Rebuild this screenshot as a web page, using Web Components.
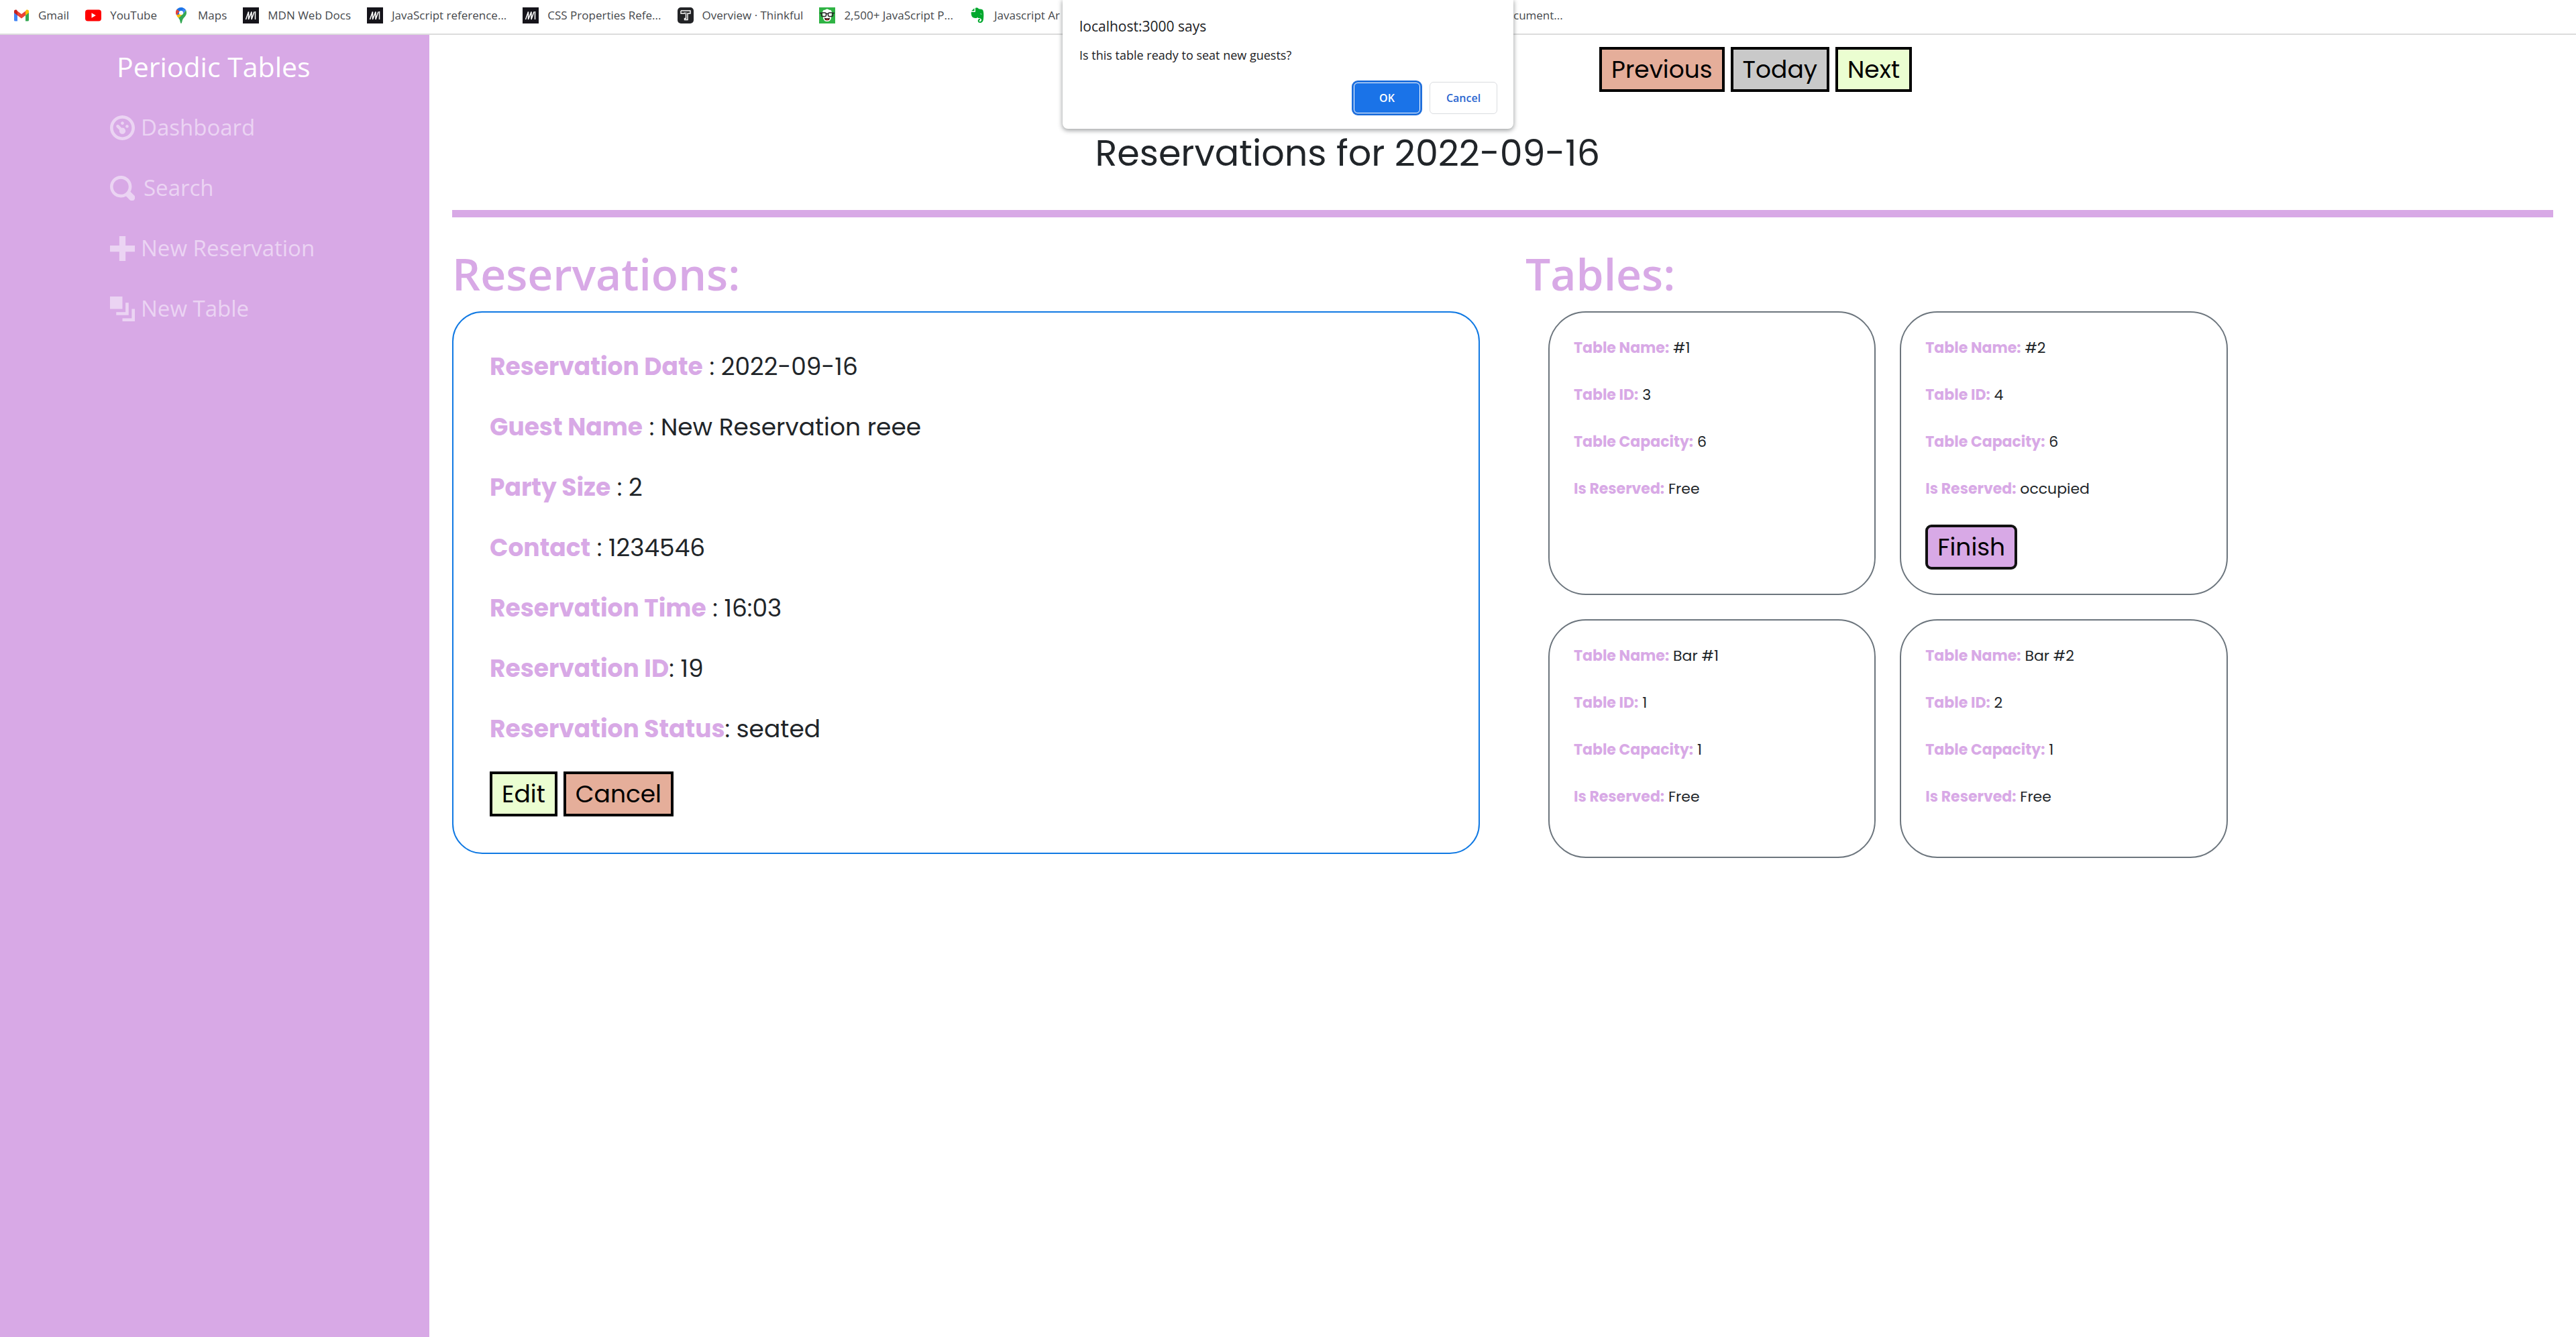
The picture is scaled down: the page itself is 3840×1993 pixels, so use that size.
<!DOCTYPE html>
<html lang="en">
<head>
<meta charset="utf-8">
<meta name="viewport" content="width=device-width, initial-scale=1">
<title>Periodic Tables</title>
<style>
  body { margin: 0; background: #fff; }
</style>
</head>
<body>
<periodic-app></periodic-app>

<script>
const ICONS = {
  gmail: '<svg viewBox="0 0 24 24"><path d="M1 6v13a1.500 1.500 0 0 0 1.500 1.500H6V11z" fill="#4285f4"/><path d="M18 11v9.500h3.500A1.500 1.500 0 0 0 23 19V6z" fill="#34a853"/><path d="M18 5.500V12l5-4V6c0-2.500-2.500-3-4-2z" fill="#fbbc04"/><path d="M6 12V5.500l6 4.500 6-4.500V12l-6 4.500z" fill="#ea4335"/><path d="M1 6v2l5 4V5.500L5 4C3.500 3 1 3.500 1 6z" fill="#c5221f"/></svg>',
  youtube: '<svg viewBox="0 0 24 24"><rect y="3.500" width="24" height="17" rx="4" fill="#f00"/><path d="M9.500 8.300v7.400l6.300-3.700z" fill="#fff"/></svg>',
  maps: '<svg viewBox="0 0 24 24"><path d="M12 0c3 0 5.800 1.700 7.200 4.300L8 14C6 11.500 4 9 4 8a8 8 0 0 1 8-8z" fill="#1a73e8"/><path d="M5.800 3L9.500 6.200 5 11.500C4.300 10.300 4 9 4 8c0-2 .7-3.700 1.800-5z" fill="#ea4335"/><path d="M14.300 10.200L19.200 4.300A8 8 0 0 1 20 8c0 5-4.500 7-6 11-.6 1.600-.8 5-2 5s-1.400-3.400-2-5c-.4-1.200-1.200-2.300-2.100-3.300z" fill="#34a853"/><path d="M9.700 10.100l4.600.1-6.400 5.500C6.700 14.300 5.600 13 5 11.500z" fill="#fbbc04"/><path d="M14.300 2l4.900 2.300-4.900 5.900z" fill="#4285f4"/><circle cx="12" cy="8" r="3.100" fill="#fff"/></svg>',
  mdn: '<svg viewBox="0 0 24 24"><rect width="24" height="24" fill="#15141a"/><path d="M4.500 18L8.500 6.500V18L13 6.500V18L17 6.500M18.500 6v12" fill="none" stroke="#fff" stroke-width="1.500"/></svg>',
  thinkful: '<svg viewBox="0 0 24 24"><rect width="24" height="24" rx="5" fill="#222326"/><path d="M5 5h14v4h-4v9.500h-4.500v-2h2V7.500M5 5v4h5.500v-1.500" fill="none" stroke="#fff" stroke-width="1.400"/></svg>',
  problems: '<svg viewBox="0 0 24 24"><rect width="24" height="24" fill="#2fb344"/><path d="M5 8c0-3 2-5 4-4 1-2 5-2 6 0 3-1 4 2 4 4l-1 8c-1 4-3 5-6 5s-5-1-6-5z" fill="#fff"/><g fill="none" stroke="#222" stroke-width="1.500"><rect x="3.500" y="8" width="7" height="5.500" rx="2"/><rect x="13.500" y="8" width="7" height="5.500" rx="2"/><path d="M10.500 9.500h3M1 8.500h3M20 8.500h3"/></g><path d="M8 15.500c2 1 6 1 8 0 0 3-1.500 4-4 4s-4-1-4-4z" fill="#3a1513"/><path d="M10 18.500c1-1 3-1 4 0-1 1-3 1-4 0z" fill="#d33"/></svg>',
  evernote: '<svg viewBox="0 0 24 24"><path d="M7.500 1.200v4.300H3zM9 1c2-.8 4-.3 5 1.200 2.500.2 5.500.5 6.300 2C21.500 7 21.600 12 21 17c-.4 3.500-1.500 6-5 6-2.200 0-3.300-1.300-3.300-3 0-1.800 1.300-3 3.300-3v2c-.8 0-1.300.5-1.300 1.200S15 21.300 16 21.300c1.200 0 2-.9 2-2.500 0-2-1.500-2.800-4-2.800-1 0-1.500-.5-1.800-1.500-.7 1.300-1.700 1.700-3.200 1.500-4-.5-5.500-2-6-5C2.700 9.300 2.500 8 3 7h4.500C8.500 7 9 6.500 9 5.500z" fill="#00a82d"/><path d="M16 10c1-.8 2.300-.5 2.800.6z" fill="#fff"/></svg>',
  dashboard: '<svg viewBox="0 0 8 8"><path d="M4 0c-2.200 0-4 1.800-4 4s1.800 4 4 4 4-1.800 4-4-1.800-4-4-4zm0 1c1.660 0 3 1.340 3 3s-1.340 3-3 3-3-1.340-3-3 1.340-3 3-3zm0 1c-.28 0-.5.22-.5.5s.22.5.5.5.5-.22.5-.5-.22-.5-.5-.5zm-1.660 1a.5.5 0 0 0-.19.84l.91.910c-.02.080-.06.160-.06.250 0 .55.45 1 1 1s1-.45 1-1-.45-1-1-1c-.09 0-.17.040-.25.060l-.91-.91a.5.5 0 0 0-.5-.15zm3.160 0c-.28 0-.5.22-.5.5s.22.5.5.5.5-.22.5-.5-.22-.5-.5-.5z"/></svg>',
  search: '<svg viewBox="0 0 8 8"><path d="M3.500 0c-1.930 0-3.500 1.570-3.500 3.500s1.570 3.500 3.500 3.500c.59 0 1.170-.14 1.660-.41a1 1 0 0 0 .13.130l1 1a1.020 1.020 0 1 0 1.440-1.440l-1-1a1 1 0 0 0-.16-.13c.27-.49.44-1.060.44-1.660 0-1.930-1.550-3.500-3.500-3.500zm0 1c1.390 0 2.500 1.110 2.500 2.500 0 .66-.24 1.270-.66 1.720l-.03.030a1 1 0 0 0-.13.130c-.44.400-1.040.630-1.690.630-1.390 0-2.500-1.110-2.500-2.500s1.110-2.500 2.500-2.500z"/></svg>',
  plus: '<svg viewBox="0 0 8 8"><path d="M3 0v3h-3v2h3v3h2v-3h3v-2h-3v-3h-2z"/></svg>',
  layers: '<svg viewBox="0 0 8 8"><path d="M0 0v4h4v-4h-4zm5 2v3h-3v1h4v-4h-1zm2 2v3h-3v1h4v-4h-1z"/></svg>'
};

function define(name, html) {
  customElements.define(name, class extends HTMLElement {
    connectedCallback() {
      if (this.shadowRoot) return;
      const root = this.attachShadow({ mode: 'open' });
      root.innerHTML = typeof html === 'function' ? html(this) : html;
    }
  });
}

define('bookmark-link', el => `
  <style>
    :host { display: block; flex: none; }
    a { display: flex; align-items: center; gap: 13px; color: #45484c; text-decoration: none; white-space: nowrap; }
    svg { display: block; width: 24px; height: 24px; flex: none; }
  </style>
  <a href="#">${ICONS[el.getAttribute('icon')] || ''}<slot></slot></a>`);

define('bookmarks-bar', `
  <style>
    :host { display: grid; grid-template-columns: minmax(0, 1fr) 672px minmax(0, 1fr); height: 50px; border-bottom: 2px solid #dcdcdc; background: #fff;
      font: 17px/24px "Open Sans", sans-serif; }
    .side { overflow: hidden; display: flex; align-items: center; gap: 24px; padding-bottom: 4px; }
    .first { padding-left: 20px; }
  </style>
  <div class="side first">
    <bookmark-link icon="gmail">Gmail</bookmark-link>
    <bookmark-link icon="youtube">YouTube</bookmark-link>
    <bookmark-link icon="maps">Maps</bookmark-link>
    <bookmark-link icon="mdn">MDN Web Docs</bookmark-link>
    <bookmark-link icon="mdn">JavaScript reference...</bookmark-link>
    <bookmark-link icon="mdn">CSS Properties Refe...</bookmark-link>
    <bookmark-link icon="thinkful">Overview · Thinkful</bookmark-link>
    <bookmark-link icon="problems">2,500+ JavaScript P...</bookmark-link>
    <bookmark-link icon="evernote">Javascript Ar</bookmark-link>
  </div>
  <div></div>
  <div class="side"><bookmark-link>cument...</bookmark-link></div>`);

define('confirm-dialog', `
  <style>
    :host { display: block; position: absolute; z-index: 1; top: 0; left: 0; right: 0; margin: 0 auto; width: 672px;
      font: 18px/24px "Open Sans", sans-serif; color: #202124; }
    dialog { position: static; display: block; box-sizing: border-box; width: 100%; margin: 0; border: 0; padding: 24px 24px 20px 25px;
      color: inherit; background: #fff; border-radius: 0 0 8px 8px; box-shadow: 0 2px 6px 1px rgba(60,64,67,.45); }
    h2 { margin: 0 0 16px; font-size: 21px; line-height: 30px; font-weight: 400; }
    p { margin: 0 0 26px; }
    .actions { display: flex; align-items: center; justify-content: flex-end; gap: 14px; height: 52px; }
    button { box-sizing: border-box; height: 48px; width: 101px; margin: 0; padding: 0; border-radius: 6px; font: 600 16px/24px "Open Sans", sans-serif;
      border: 1px solid #dadce0; background: #fff; color: #2a66d0; }
    .ok { height: 46px; width: 99px; border-color: #fff; outline: 3px solid #1f6fdc; background: #1a73e8; color: #fff; }
  </style>
  <dialog open aria-labelledby="t">
    <h2 id="t">localhost:3000 says</h2>
    <p>Is this table ready to seat new guests?</p>
    <div class="actions"><button class="ok">OK</button><button>Cancel</button></div>
  </dialog>`);

define('nav-item', el => `
  <style>
    :host { display: block; }
    a { display: flex; align-items: center; height: 90px; gap: 9px; color: #ebd4f3; text-decoration: none; }
    svg { display: block; width: 37px; height: 37px; fill: currentColor; }
    :host([wide]) a { gap: 13px; }
  </style>
  <a href="#">${ICONS[el.getAttribute('icon')]}<slot></slot></a>`);

define('side-nav', `
  <style>
    :host { display: block; box-sizing: border-box; background: #d8a9e6; color: #fff; padding: 20px 36px 0 164px;
      font: 33px/54px "Open Sans", sans-serif; }
    .brand { display: block; padding-left: 10px; margin-bottom: 19px; font-size: 41px; line-height: 54px; color: #fff; text-decoration: none; white-space: nowrap; }
    nav { display: block; }
  </style>
  <a class="brand" href="#">Periodic Tables</a>
  <nav>
    <nav-item icon="dashboard">Dashboard</nav-item>
    <nav-item icon="search" wide>Search</nav-item>
    <nav-item icon="plus">New Reservation</nav-item>
    <nav-item icon="layers">New Table</nav-item>
  </nav>`);

define('action-button', `
  <style>
    :host { display: block; flex: none; }
    button { display: block; box-sizing: border-box; margin: 0; border: 4px solid #000; border-radius: 0; padding: 2px 14px;
      font: 36px/55px Poppins, Inter, sans-serif; color: #000; background: #d8a9e6; }
    :host([tone="rose"]) button { background: #e5ae9a; }
    :host([tone="grey"]) button { background: #c9c9c9; }
    :host([tone="lime"]) button { background: #ebfed1; }
    :host([tone="lilac"]) button { border-color: #111; border-radius: 9px; }
  </style>
  <button type="button"><slot></slot></button>`);

define('detail-row', el => `
  <style>
    :host { display: block; margin-bottom: 36px; }
    p { margin: 0; }
    b { color: #d8a9e6; font-weight: 700; }
  </style>
  <p><b>${el.getAttribute('label')}</b>${el.getAttribute('sep') || ''} <slot></slot></p>`);

define('reservation-card', `
  <style>
    :host { display: block; border: 2px solid #1079e3; border-radius: 45px; padding: 54px; font-size: 36px; line-height: 54px; }
    .actions { display: flex; gap: 9px; }
  </style>
  <slot></slot>
  <div class="actions"><slot name="actions"></slot></div>`);

define('table-card', `
  <style>
    :host { display: flex; flex-direction: column; align-items: flex-start; box-sizing: border-box; border: 2px solid #6c757d; border-radius: 56px;
      padding: 36px; font-size: 22px; line-height: 34px; }
  </style>
  <slot></slot>`);

define('dashboard-view', `
  <style>
    :host { display: block; padding: 18px 34px 36px; box-sizing: border-box; }
    .days { display: flex; gap: 9px; padding-left: 54.6%; }
    h1 { margin: 41px 0 0; padding-left: 30.6%; font-size: 54px; line-height: 101px; font-weight: 400; white-space: nowrap; }
    hr { margin: 34px 0 36px; border: 0; height: 11px; background: #d8a9e6; }
    .columns { display: grid; grid-template-columns: 1fr 1fr; gap: 68px; align-items: start; }
    h2 { margin: 0 0 10px; font: 600 66px/94px "Open Sans", sans-serif; color: #d8a9e6; }
    .tables { display: grid; grid-template-columns: repeat(2, 32.6%); gap: 36px; padding-left: 34px; }
  </style>
  <div class="days">
    <action-button tone="rose">Previous</action-button>
    <action-button tone="grey">Today</action-button>
    <action-button tone="lime">Next</action-button>
  </div>
  <h1>Reservations for 2022-09-16</h1>
  <hr>
  <div class="columns">
    <section>
      <h2>Reservations:</h2>
      <reservation-card>
        <detail-row label="Reservation Date" sep=" :">2022-09-16</detail-row>
        <detail-row label="Guest Name" sep=" :">New Reservation reee</detail-row>
        <detail-row label="Party Size" sep=" :">2</detail-row>
        <detail-row label="Contact" sep=" :">1234546</detail-row>
        <detail-row label="Reservation Time" sep=" :">16:03</detail-row>
        <detail-row label="Reservation ID" sep=":">19</detail-row>
        <detail-row label="Reservation Status" sep=":">seated</detail-row>
        <action-button slot="actions" tone="lime">Edit</action-button>
        <action-button slot="actions" tone="rose">Cancel</action-button>
      </reservation-card>
    </section>
    <section>
      <h2>Tables:</h2>
      <div class="tables">
        <table-card>
          <detail-row label="Table Name:">#1</detail-row>
          <detail-row label="Table ID:">3</detail-row>
          <detail-row label="Table Capacity:">6</detail-row>
          <detail-row label="Is Reserved:">Free</detail-row>
        </table-card>
        <table-card>
          <detail-row label="Table Name:">#2</detail-row>
          <detail-row label="Table ID:">4</detail-row>
          <detail-row label="Table Capacity:">6</detail-row>
          <detail-row label="Is Reserved:">occupied</detail-row>
          <action-button tone="lilac">Finish</action-button>
        </table-card>
        <table-card>
          <detail-row label="Table Name:">Bar #1</detail-row>
          <detail-row label="Table ID:">1</detail-row>
          <detail-row label="Table Capacity:">1</detail-row>
          <detail-row label="Is Reserved:">Free</detail-row>
        </table-card>
        <table-card>
          <detail-row label="Table Name:">Bar #2</detail-row>
          <detail-row label="Table ID:">2</detail-row>
          <detail-row label="Table Capacity:">1</detail-row>
          <detail-row label="Is Reserved:">Free</detail-row>
        </table-card>
      </div>
    </section>
  </div>`);

define('periodic-app', `
  <style>
    :host { display: flex; flex-direction: column; min-height: 100vh; font: 36px/54px Poppins, Inter, sans-serif; color: #212529; }
    .page { flex: 1; display: grid; grid-template-columns: 1fr 5fr; }
    main { min-width: 0; }
  </style>
  <bookmarks-bar></bookmarks-bar>
  <div class="page">
    <side-nav></side-nav>
    <main><dashboard-view></dashboard-view></main>
  </div>
  <confirm-dialog></confirm-dialog>`);
</script>
</body>
</html>
